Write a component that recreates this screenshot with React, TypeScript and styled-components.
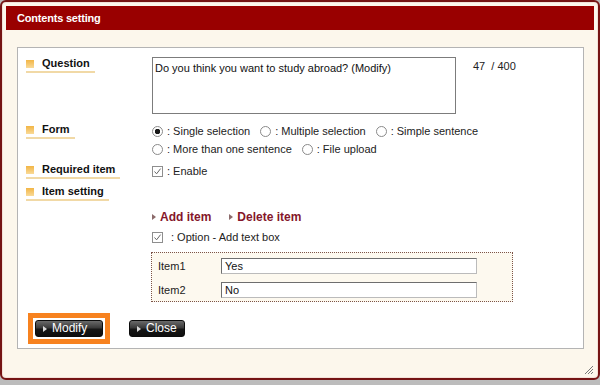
import React from 'react';
import styled, { createGlobalStyle } from 'styled-components';

const GlobalStyle = createGlobalStyle`
  html, body {
    margin: 0;
    padding: 0;
    background: #bcbcbc;
    font-family: 'Liberation Sans', Arial, sans-serif;
  }
`;

const Dialog = styled.div`
  position: relative;
  box-sizing: border-box;
  width: 600px;
  height: 380px;
  border: 2px solid #751414;
  border-radius: 6px;
  box-shadow: inset 0 0 0 1px #f3e2d9;
  background: #fcf7ec;
  padding: 4px;
  display: flex;
  flex-direction: column;
`;

const TitleBar = styled.div`
  height: 24px;
  background: #990000;
  color: #fff;
  font-size: 11px;
  font-weight: bold;
  letter-spacing: -0.2px;
  line-height: 24px;
  padding-left: 11px;
`;

const DialogBody = styled.div`
  flex: 1;
  padding: 17px 10px 0 11px;
`;

const Panel = styled.div`
  box-sizing: border-box;
  width: 567px;
  height: 302px;
  background: #fff;
  border: 1px solid #b4b4b4;
  padding: 9px 0 0 8px;
  font-size: 11px;
  color: #222;
`;

const Row = styled.div<{ $top?: number }>`
  display: flex;
  align-items: flex-start;
  margin-top: ${(p) => p.$top ?? 0}px;
`;

const LabelCell = styled.div`
  width: 126px;
  flex-shrink: 0;
`;

const Label = styled.span<{ $top?: number }>`
  display: inline-flex;
  align-items: center;
  gap: 8px;
  margin-top: ${(p) => p.$top ?? 0}px;
  padding: 0 5px 1px 0;
  line-height: 13px;
  font-size: 11px;
  font-weight: bold;
  color: #111;
  border-bottom: 2px solid #f1d9a6;
`;

const LabelIcon = styled.span`
  width: 8px;
  height: 8px;
  background: linear-gradient(#f2b545, #f9da98);
`;

const Content = styled.div`
  flex: 1;
`;

const QuestionBox = styled.div`
  box-sizing: border-box;
  width: 304px;
  height: 57px;
  border: 1px solid #7c7c7c;
  padding: 3px 2px;
  line-height: 14px;
  color: #111;
`;

const Counter = styled.span`
  margin: 3px 0 0 17px;
  color: #222;
  white-space: pre;
`;

const OptionLine = styled.div`
  display: flex;
  align-items: center;
  height: 18px;
  white-space: nowrap;
`;

const Choice = styled.span`
  display: inline-flex;
  align-items: center;
  gap: 4px;
  margin-right: 10px;
`;

const Radio = styled.span<{ $checked?: boolean }>`
  box-sizing: border-box;
  width: 11px;
  height: 11px;
  border-radius: 50%;
  border: 1px solid #8a8a8a;
  background: radial-gradient(circle, ${(p) => (p.$checked ? '#1a1a1a 0 2.5px, #fff 3px' : '#fff 0, #fff 100%')});
`;

const BoxCheck = styled.span`
  display: inline-flex;
  box-sizing: border-box;
  width: 11px;
  height: 11px;
  border: 1px solid #8e8e8e;
  background: #fff;
`;

const LinkLine = styled.div`
  display: flex;
  align-items: center;
  gap: 18px;
  height: 16px;
  margin-top: 24px;
  font-size: 12px;
  font-weight: bold;
  color: #85162a;
`;

const ActionLink = styled.span`
  display: inline-flex;
  align-items: center;
  gap: 4px;
  &::before {
    content: '';
    border-left: 4px solid #8c6b6b;
    border-top: 3.5px solid transparent;
    border-bottom: 3.5px solid transparent;
  }
`;

const OptionCheck = styled.div`
  display: flex;
  align-items: center;
  gap: 8px;
  height: 16px;
  margin-top: 4px;
`;

const ItemBox = styled.div`
  box-sizing: border-box;
  width: 362px;
  margin: 7px 0 0 -1px;
  padding: 5px 6px 3px;
  border: 1px dotted #7d5448;
  background: #fdf9ef;
  display: flex;
  flex-direction: column;
  gap: 8px;
`;

const ItemRow = styled.div`
  display: flex;
  align-items: center;
`;

const ItemName = styled.span`
  width: 63px;
`;

const ItemInput = styled.div`
  box-sizing: border-box;
  width: 256px;
  height: 16px;
  border: 1px solid #6e6e6e;
  border-right-color: #bbb;
  border-bottom-color: #bbb;
  background: #fff;
  padding-left: 3px;
  line-height: 14px;
  color: #111;
`;

const ButtonRow = styled.div`
  display: flex;
  align-items: center;
  gap: 19px;
  margin: 11px 0 0 2px;
`;

const Focus = styled.div`
  border: 5px solid #f7821f;
  padding: 2px;
  background: #fff;
  display: flex;
`;

const Button = styled.button<{ $width: number }>`
  box-sizing: border-box;
  width: ${(p) => p.$width}px;
  height: 17px;
  padding: 0 0 0 7px;
  display: flex;
  align-items: center;
  gap: 5px;
  border: 1px solid #0c0c0c;
  border-radius: 3px;
  background: linear-gradient(#6a6a6a 0%, #3a3a3a 45%, #161616 55%, #0e0e0e 100%);
  color: #fff;
  font-family: 'Liberation Sans', Arial, sans-serif;
  font-size: 12px;
  line-height: 15px;
  &::before {
    content: '';
    border-left: 4px solid #d8d8d8;
    border-top: 3.5px solid transparent;
    border-bottom: 3.5px solid transparent;
  }
`;

const Grip = styled.svg`
  position: absolute;
  right: 4px;
  bottom: 3px;
`;

const Check = () => (
  <BoxCheck>
    <svg width="9" height="9" viewBox="0 0 9 9">
      <path d="M1.5 4.5 L3.6 6.8 L7.6 1.6" fill="none" stroke="#666" strokeWidth="1" />
    </svg>
  </BoxCheck>
);

const SectionLabel = ({ text, top }: { text: string; top?: number }) => (
  <LabelCell>
    <Label $top={top}>
      <LabelIcon />
      {text}
    </Label>
  </LabelCell>
);

export default function App() {
  return (
    <>
      <GlobalStyle />
      <Dialog>
        <TitleBar>Contents setting</TitleBar>
        <DialogBody>
          <Panel>
            <Row>
              <SectionLabel text="Question" />
              <QuestionBox>Do you think you want to study abroad? (Modify)</QuestionBox>
              <Counter>47  / 400</Counter>
            </Row>

            <Row $top={8}>
              <SectionLabel text="Form" top={1} />
              <Content>
                <OptionLine>
                  <Choice><Radio $checked />: Single selection</Choice>
                  <Choice><Radio />: Multiple selection</Choice>
                  <Choice><Radio />: Simple sentence</Choice>
                </OptionLine>
                <OptionLine>
                  <Choice><Radio />: More than one sentence</Choice>
                  <Choice><Radio />: File upload</Choice>
                </OptionLine>
              </Content>
            </Row>

            <Row $top={4}>
              <SectionLabel text="Required item" top={1} />
              <Content>
                <OptionLine>
                  <Choice><Check />: Enable</Choice>
                </OptionLine>
              </Content>
            </Row>

            <Row $top={5}>
              <SectionLabel text="Item setting" />
              <Content>
                <LinkLine>
                  <ActionLink>Add item</ActionLink>
                  <ActionLink>Delete item</ActionLink>
                </LinkLine>
                <OptionCheck>
                  <Check />
                  <span>: Option - Add text box</span>
                </OptionCheck>
                <ItemBox>
                  <ItemRow>
                    <ItemName>Item1</ItemName>
                    <ItemInput>Yes</ItemInput>
                  </ItemRow>
                  <ItemRow>
                    <ItemName>Item2</ItemName>
                    <ItemInput>No</ItemInput>
                  </ItemRow>
                </ItemBox>
              </Content>
            </Row>

            <ButtonRow>
              <Focus>
                <Button $width={68}>Modify</Button>
              </Focus>
              <Button $width={56}>Close</Button>
            </ButtonRow>
          </Panel>
        </DialogBody>
        <Grip width="10" height="10" viewBox="0 0 10 10">
          <path d="M9 1 L1 9 M9 4 L4 9 M9 7 L7 9" stroke="#777" strokeWidth="1" />
        </Grip>
      </Dialog>
    </>
  );
}
